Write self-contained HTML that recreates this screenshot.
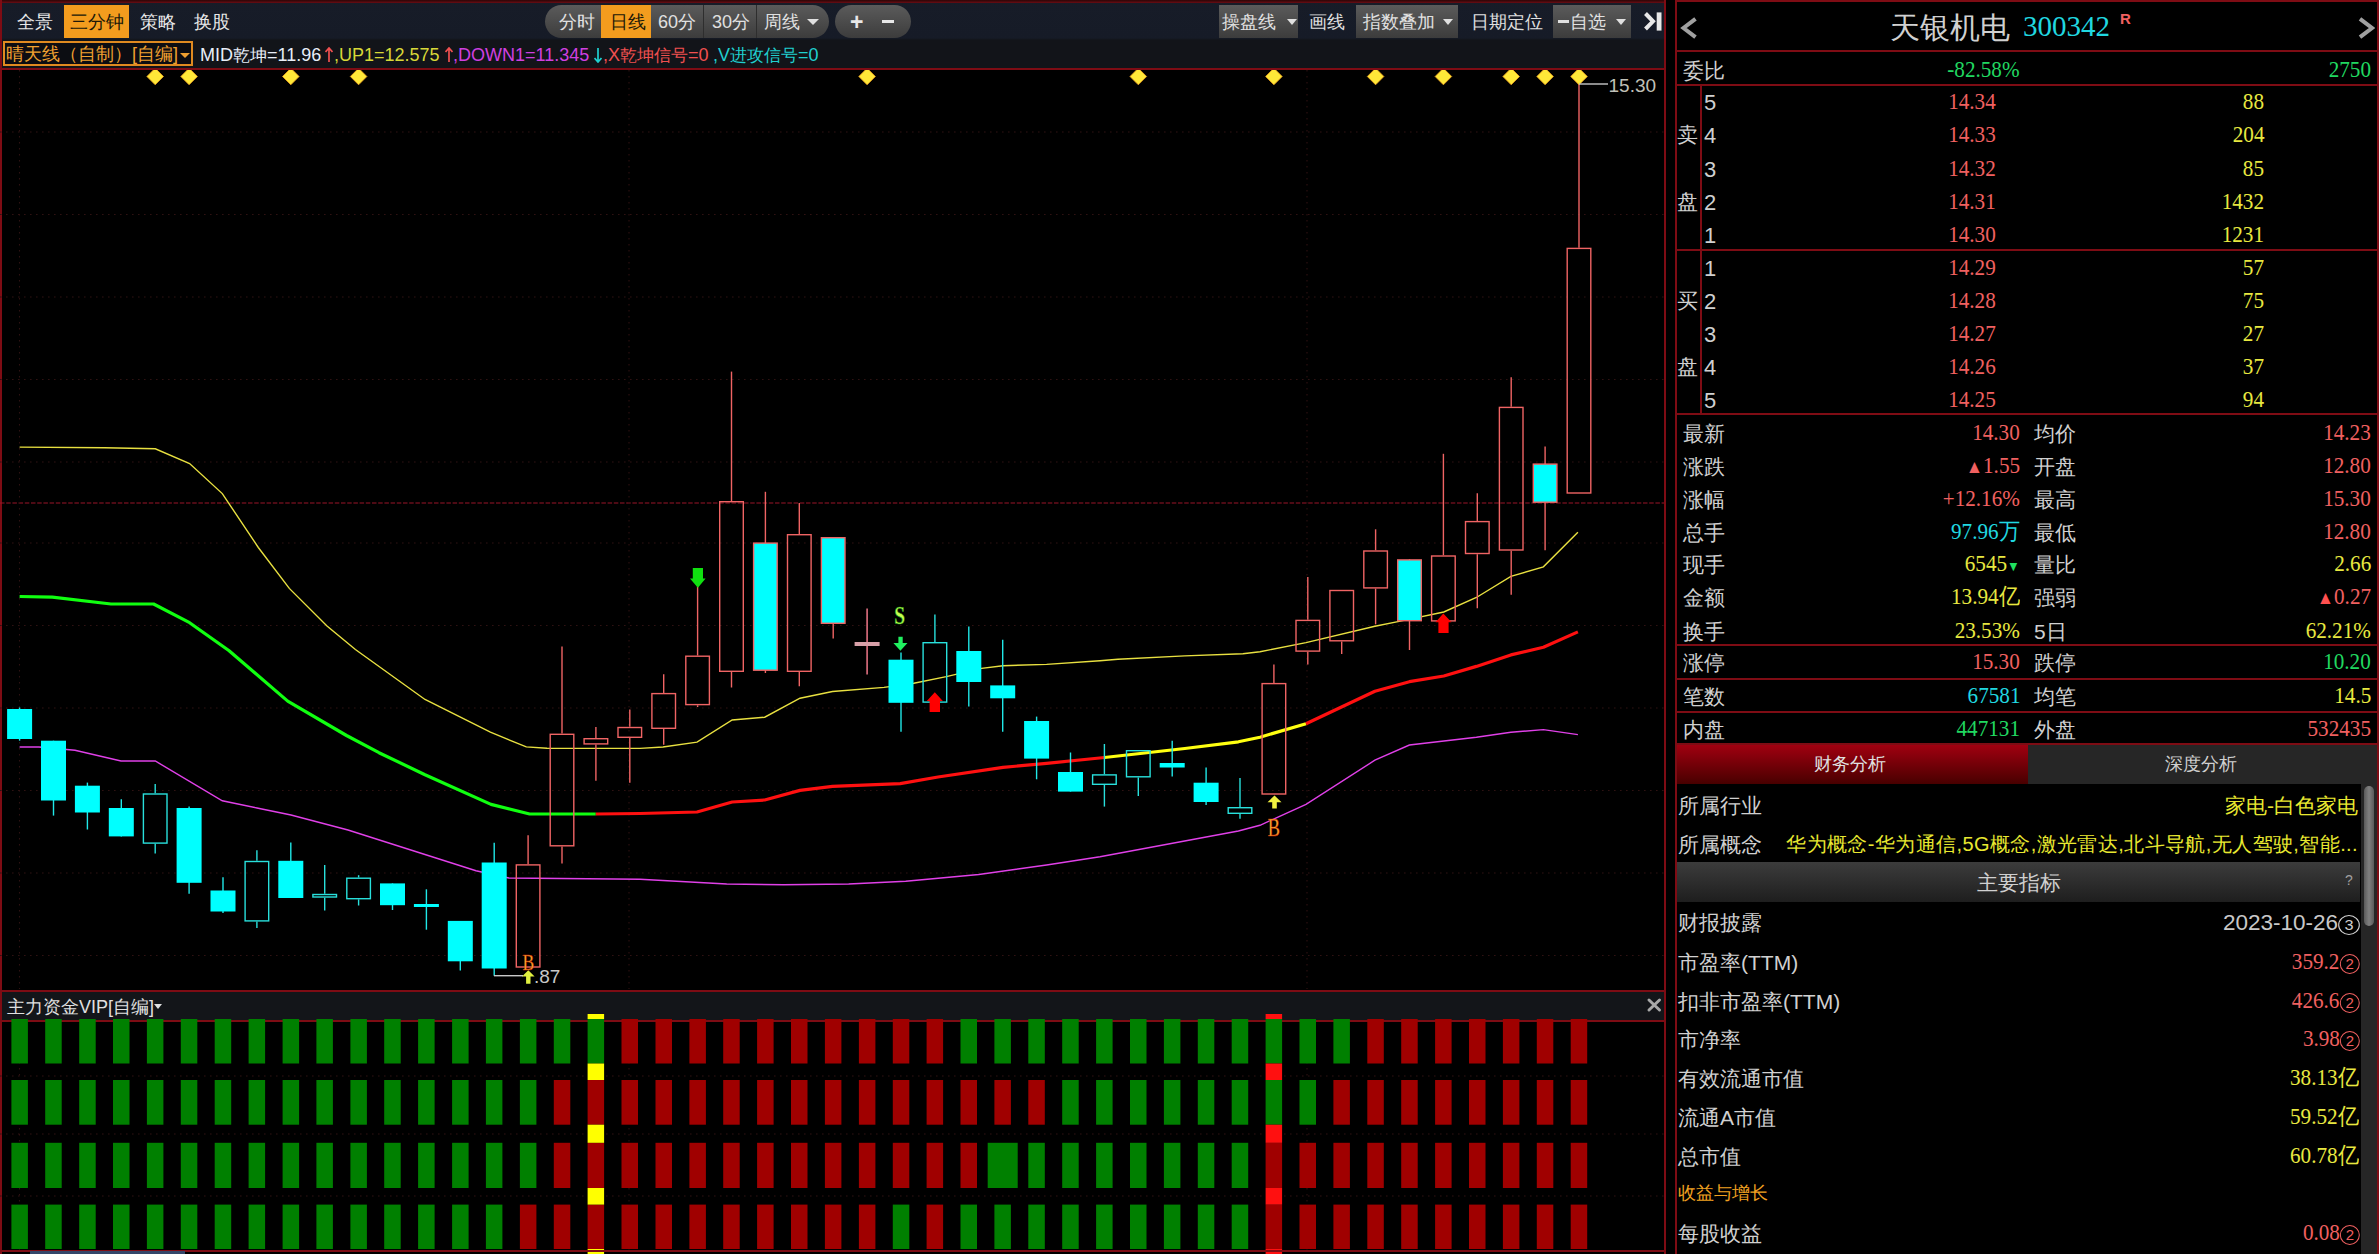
<!DOCTYPE html>
<html><head><meta charset="utf-8">
<style>
*{margin:0;padding:0;box-sizing:border-box}
html,body{width:2379px;height:1254px;overflow:hidden;background:#000;font-family:"Liberation Sans",sans-serif;color:#d8d8d8}
.a{position:absolute}
.rl{position:absolute;background:#7e0c14}
.tb{position:absolute;left:0;top:0;width:1666px;height:69px;background:linear-gradient(#171c28 0,#161b27 38px,#121419 40px,#121419 100%)}
.t{position:absolute;white-space:nowrap;line-height:1}
.btn{position:absolute;background:linear-gradient(#5b5b5b,#3c3c3c)}
.ser{font-family:"Liberation Serif",serif}
.rp .t{font-size:21px}
</style></head><body>
<!-- LEFT PANEL -->
<div class="tb"></div>
<div class="rl" style="left:0;top:0;width:1666px;height:3px;background:linear-gradient(#2a0606,#6a0c14)"></div>
<!-- left buttons -->
<div class="a" style="left:64px;top:5px;width:65px;height:33px;background:#f39c1e"></div>
<div class="t" style="left:17px;top:13px;font-size:18px;color:#e8e8e8">全景</div>
<div class="t" style="left:70px;top:13px;font-size:18px;color:#201808">三分钟</div>
<div class="t" style="left:140px;top:13px;font-size:18px;color:#e8e8e8">策略</div>
<div class="t" style="left:194px;top:13px;font-size:18px;color:#e8e8e8">换股</div>
<!-- pill group -->
<div class="btn" style="left:545px;top:5px;width:284px;height:33px;border-radius:17px;overflow:hidden">
  <div class="a" style="left:56px;top:0;width:50px;height:33px;background:#f39c1e"></div>
  <div class="a" style="left:158px;top:0;width:1px;height:33px;background:#2e2e2e"></div>
  <div class="a" style="left:211px;top:0;width:1px;height:33px;background:#2e2e2e"></div>
</div>
<div class="t" style="left:559px;top:13px;font-size:18px;color:#e0e0e0">分时</div>
<div class="t" style="left:610px;top:13px;font-size:18px;color:#201808">日线</div>
<div class="t" style="left:658px;top:13px;font-size:18px;color:#e0e0e0">60分</div>
<div class="t" style="left:712px;top:13px;font-size:18px;color:#e0e0e0">30分</div>
<div class="t" style="left:764px;top:13px;font-size:18px;color:#e0e0e0">周线</div>
<div class="a" style="left:807px;top:19px;width:0;height:0;border-left:6px solid transparent;border-right:6px solid transparent;border-top:6px solid #e0e0e0"></div>
<div class="btn" style="left:835px;top:5px;width:76px;height:33px;border-radius:17px"></div>
<div class="t" style="left:850px;top:11px;font-size:23px;font-weight:bold;color:#e8e8e8">+</div>
<div class="a" style="left:882px;top:20px;width:12px;height:3px;background:#e8e8e8"></div>
<!-- right buttons -->
<div class="btn" style="left:1219px;top:5px;width:79px;height:33px"></div>
<div class="t" style="left:1222px;top:13px;font-size:18px;color:#e0e0e0">操盘线</div>
<div class="a" style="left:1287px;top:19px;width:0;height:0;border-left:5px solid transparent;border-right:5px solid transparent;border-top:6px solid #e0e0e0"></div>
<div class="t" style="left:1309px;top:13px;font-size:18px;color:#e0e0e0">画线</div>
<div class="btn" style="left:1356px;top:5px;width:102px;height:33px"></div>
<div class="t" style="left:1363px;top:13px;font-size:18px;color:#e0e0e0">指数叠加</div>
<div class="a" style="left:1443px;top:19px;width:0;height:0;border-left:5px solid transparent;border-right:5px solid transparent;border-top:6px solid #e0e0e0"></div>
<div class="t" style="left:1471px;top:13px;font-size:18px;color:#e0e0e0">日期定位</div>
<div class="btn" style="left:1553px;top:5px;width:78px;height:33px"></div>
<div class="a" style="left:1558px;top:20px;width:11px;height:3px;background:#e0e0e0"></div>
<div class="t" style="left:1570px;top:13px;font-size:18px;color:#e0e0e0">自选</div>
<div class="a" style="left:1616px;top:19px;width:0;height:0;border-left:5px solid transparent;border-right:5px solid transparent;border-top:6px solid #e0e0e0"></div>
<svg class="a" style="left:1642px;top:11px" width="24" height="22"><path d="M3.5,2.5 L11,10.3 L3.5,18" fill="none" stroke="#e8e8e8" stroke-width="4"/><rect x="14.7" y="1.4" width="4.8" height="18.2" fill="#e8e8e8"/></svg>
<!-- indicator line -->
<div class="a" style="left:3px;top:41px;width:190px;height:25px;border:2px solid #e08a20;background:#0c0d12"></div>
<div class="t" style="left:6px;top:45px;font-size:18px;color:#f0a030">晴天线（自制）[自编]</div>
<div class="a" style="left:180px;top:53px;width:0;height:0;border-left:5px solid transparent;border-right:5px solid transparent;border-top:5px solid #f0a030"></div>
<div class="t" style="left:200px;top:46px;font-size:18px;color:#e8eef8">MID<span style="font-size:17px">乾坤</span>=11.96</div><div class="t" style="left:334px;top:46px;font-size:18px;color:#d8d838">,UP1=12.575</div><div class="t" style="left:453px;top:46px;font-size:18px;color:#d040e0">,DOWN1=11.345</div><div class="t" style="left:603px;top:46px;font-size:18px;color:#f05050">,X<span style="font-size:17px">乾坤信号</span>=0</div><div class="t" style="left:713px;top:46px;font-size:18px;color:#20d0d0">,V<span style="font-size:17px">进攻信号</span>=0</div><svg class="a" style="left:325px;top:47px" width="8" height="16"><path d="M4,1 L4,15 M0.5,5 L4,1 L7.5,5" fill="none" stroke="#f05050" stroke-width="1.7"/></svg><svg class="a" style="left:444.5px;top:47px" width="8" height="16"><path d="M4,1 L4,15 M0.5,5 L4,1 L7.5,5" fill="none" stroke="#f05050" stroke-width="1.7"/></svg><svg class="a" style="left:593.5px;top:47px" width="8" height="16"><path d="M4,1 L4,15 M0.5,11 L4,15 L7.5,11" fill="none" stroke="#20d0d0" stroke-width="1.7"/></svg>
<!-- red lines left panel -->
<div class="rl" style="left:0;top:68px;width:1666px;height:2px"></div>
<div class="rl" style="left:0;top:0;width:2px;height:1254px"></div>
<div class="rl" style="left:1664px;top:0;width:2px;height:1254px"></div>
<svg width="1664" height="919" viewBox="0 70 1664 919" style="position:absolute;left:0;top:70px">
<line x1="0" y1="132" x2="1664" y2="132" stroke="#2e1212" stroke-width="1.1" stroke-dasharray="1.6,4.4"/>
<line x1="0" y1="214.5" x2="1664" y2="214.5" stroke="#2e1212" stroke-width="1.1" stroke-dasharray="1.6,4.4"/>
<line x1="0" y1="297" x2="1664" y2="297" stroke="#2e1212" stroke-width="1.1" stroke-dasharray="1.6,4.4"/>
<line x1="0" y1="379.5" x2="1664" y2="379.5" stroke="#2e1212" stroke-width="1.1" stroke-dasharray="1.6,4.4"/>
<line x1="0" y1="462" x2="1664" y2="462" stroke="#2e1212" stroke-width="1.1" stroke-dasharray="1.6,4.4"/>
<line x1="0" y1="543" x2="1664" y2="543" stroke="#2e1212" stroke-width="1.1" stroke-dasharray="1.6,4.4"/>
<line x1="0" y1="625.5" x2="1664" y2="625.5" stroke="#2e1212" stroke-width="1.1" stroke-dasharray="1.6,4.4"/>
<line x1="0" y1="708" x2="1664" y2="708" stroke="#2e1212" stroke-width="1.1" stroke-dasharray="1.6,4.4"/>
<line x1="0" y1="790.5" x2="1664" y2="790.5" stroke="#2e1212" stroke-width="1.1" stroke-dasharray="1.6,4.4"/>
<line x1="0" y1="873" x2="1664" y2="873" stroke="#2e1212" stroke-width="1.1" stroke-dasharray="1.6,4.4"/>
<line x1="0" y1="955.5" x2="1664" y2="955.5" stroke="#2e1212" stroke-width="1.1" stroke-dasharray="1.6,4.4"/>
<line x1="0" y1="503" x2="1664" y2="503" stroke="#9a1428" stroke-width="1.2" stroke-dasharray="4.5,1.7"/>
<line x1="19.5" y1="70" x2="19.5" y2="989" stroke="#2e1212" stroke-width="1.1" stroke-dasharray="1.6,4.4"/>
<line x1="629" y1="70" x2="629" y2="989" stroke="#2e1212" stroke-width="1.1" stroke-dasharray="1.6,4.4"/>
<line x1="1307" y1="70" x2="1307" y2="989" stroke="#2e1212" stroke-width="1.1" stroke-dasharray="1.6,4.4"/>
<polyline points="19.6,447.1 104.6,447.8 155.3,448.8 189.6,463.5 222.3,493.6 258.3,547.5 289.3,588.4 327.0,626.0 355.4,649.5 425.0,699.5 490.4,732.2 526.3,746.9 547.0,748.3 640.0,748.4 663.0,747.0 697.0,742.2 732.2,720.0 764.7,717.2 800.0,698.2 832.5,691.5 884.0,687.4 913.8,683.3 946.3,676.6 981.5,668.4 1003.0,665.7 1046.6,664.4 1100.0,660.8 1117.9,659.2 1184.8,655.9 1242.9,653.7 1260.0,651.8 1306.0,642.6 1374.9,626.2 1397.9,621.6 1443.8,612.0 1476.4,597.5 1510.9,576.4 1543.4,566.8 1577.9,532.3" fill="none" stroke="#e8e040" stroke-width="1.4"/>
<polyline points="19.6,747.0 39.0,747.0 75.0,750.2 121.0,761.0 155.3,761.0 222.3,800.8 257.0,808.0 291.0,815.0 348.0,830.0 476.0,870.7 508.8,878.0 640.0,879.3 726.7,884.0 783.7,884.8 848.7,884.0 905.7,881.2 978.8,874.5 1046.6,865.0 1100.0,856.8 1238.4,831.0 1260.0,825.3 1306.0,804.3 1374.9,760.2 1409.4,745.0 1476.4,737.2 1510.9,732.3 1543.4,729.6 1577.9,734.6" fill="none" stroke="#e040e8" stroke-width="1.4"/>
<polyline points="19.6,596.5 52.3,597.2 111.0,604.0 153.6,604.0 189.6,622.7 228.8,650.5 287.7,701.1 346.5,735.5 379.0,752.7 425.0,774.7 491.0,804.4 529.6,814.0 595.8,814.0" fill="none" stroke="#10ff10" stroke-width="3.2" stroke-linejoin="round"/>
<polyline points="595.8,814.0 640.0,813.5 697.0,812.0 732.2,802.0 764.7,800.0 800.0,790.4 832.5,786.4 900.2,783.6 938.0,777.0 1003.0,767.4 1046.6,763.3 1104.5,757.5" fill="none" stroke="#ff1010" stroke-width="3.2" stroke-linejoin="round"/>
<polyline points="1104.5,757.5 1184.8,748.5 1238.4,741.8 1260.0,737.2 1306.0,723.8" fill="none" stroke="#ffff10" stroke-width="3.2" stroke-linejoin="round"/>
<polyline points="1306.0,723.8 1374.9,691.3 1409.4,681.7 1443.8,676.0 1476.4,666.4 1510.9,654.9 1543.4,647.2 1577.9,631.9" fill="none" stroke="#ff1010" stroke-width="3.2" stroke-linejoin="round"/>
<line x1="19.6" y1="707.5" x2="19.6" y2="740.7" stroke="#20e8e8" stroke-width="1.4"/>
<rect x="7.1" y="709" width="25" height="30.0" fill="#00ffff"/>
<line x1="53.5" y1="740.7" x2="53.5" y2="815.6" stroke="#20e8e8" stroke-width="1.4"/>
<rect x="41.0" y="740.7" width="25" height="59.8" fill="#00ffff"/>
<line x1="87.4" y1="782.6" x2="87.4" y2="829.5" stroke="#20e8e8" stroke-width="1.4"/>
<rect x="74.9" y="785.7" width="25" height="26.8" fill="#00ffff"/>
<line x1="121.3" y1="799.3" x2="121.3" y2="836.4" stroke="#20e8e8" stroke-width="1.4"/>
<rect x="108.8" y="808" width="25" height="28.4" fill="#00ffff"/>
<line x1="155.2" y1="784" x2="155.2" y2="793.3" stroke="#28e0dc" stroke-width="1.4"/>
<line x1="155.2" y1="843.8" x2="155.2" y2="853.4" stroke="#28e0dc" stroke-width="1.4"/>
<rect x="143.4" y="794.0" width="23.6" height="49.1" fill="none" stroke="#28e0dc" stroke-width="1.4"/>
<line x1="189.1" y1="806.5" x2="189.1" y2="893.8" stroke="#20e8e8" stroke-width="1.4"/>
<rect x="176.6" y="808" width="25" height="74.8" fill="#00ffff"/>
<line x1="223.0" y1="877.3" x2="223.0" y2="913" stroke="#20e8e8" stroke-width="1.4"/>
<rect x="210.5" y="890.5" width="25" height="21.0" fill="#00ffff"/>
<line x1="256.9" y1="850.3" x2="256.9" y2="860.8" stroke="#28e0dc" stroke-width="1.4"/>
<line x1="256.9" y1="921.6" x2="256.9" y2="928" stroke="#28e0dc" stroke-width="1.4"/>
<rect x="245.1" y="861.5" width="23.6" height="59.4" fill="none" stroke="#28e0dc" stroke-width="1.4"/>
<line x1="290.8" y1="842.4" x2="290.8" y2="898" stroke="#20e8e8" stroke-width="1.4"/>
<rect x="278.3" y="860.8" width="25" height="37.2" fill="#00ffff"/>
<line x1="324.7" y1="865" x2="324.7" y2="893.8" stroke="#28e0dc" stroke-width="1.4"/>
<line x1="324.7" y1="897.7" x2="324.7" y2="910.6" stroke="#28e0dc" stroke-width="1.4"/>
<rect x="312.9" y="894.5" width="23.6" height="2.5" fill="none" stroke="#28e0dc" stroke-width="1.4"/>
<line x1="358.6" y1="875.2" x2="358.6" y2="877.5" stroke="#28e0dc" stroke-width="1.4"/>
<line x1="358.6" y1="899.4" x2="358.6" y2="905.5" stroke="#28e0dc" stroke-width="1.4"/>
<rect x="346.8" y="878.2" width="23.6" height="20.5" fill="none" stroke="#28e0dc" stroke-width="1.4"/>
<line x1="392.5" y1="883.4" x2="392.5" y2="910" stroke="#20e8e8" stroke-width="1.4"/>
<rect x="380.0" y="883.4" width="25" height="21.8" fill="#00ffff"/>
<line x1="426.4" y1="889.3" x2="426.4" y2="929.7" stroke="#20e8e8" stroke-width="1.4"/>
<rect x="413.9" y="904" width="25" height="3.0" fill="#00ffff"/>
<line x1="460.3" y1="920.9" x2="460.3" y2="970.4" stroke="#20e8e8" stroke-width="1.4"/>
<rect x="447.8" y="920.9" width="25" height="40.4" fill="#00ffff"/>
<line x1="494.2" y1="842.7" x2="494.2" y2="975.7" stroke="#20e8e8" stroke-width="1.4"/>
<rect x="481.7" y="862.5" width="25" height="106.0" fill="#00ffff"/>
<line x1="528.1" y1="835.3" x2="528.1" y2="864.2" stroke="#f06464" stroke-width="1.4"/>
<rect x="516.3" y="864.9" width="23.6" height="102.1" fill="none" stroke="#f06464" stroke-width="1.4"/>
<line x1="562.0" y1="646.5" x2="562.0" y2="733.6" stroke="#f06464" stroke-width="1.4"/>
<line x1="562.0" y1="846.5" x2="562.0" y2="863.4" stroke="#f06464" stroke-width="1.4"/>
<rect x="550.2" y="734.3" width="23.6" height="111.5" fill="none" stroke="#f06464" stroke-width="1.4"/>
<line x1="595.9" y1="727" x2="595.9" y2="738" stroke="#f06464" stroke-width="1.4"/>
<line x1="595.9" y1="744.6" x2="595.9" y2="780.7" stroke="#f06464" stroke-width="1.4"/>
<rect x="584.1" y="738.7" width="23.6" height="5.2" fill="none" stroke="#f06464" stroke-width="1.4"/>
<line x1="629.8" y1="709.4" x2="629.8" y2="726.8" stroke="#f06464" stroke-width="1.4"/>
<line x1="629.8" y1="738" x2="629.8" y2="782.8" stroke="#f06464" stroke-width="1.4"/>
<rect x="618.0" y="727.5" width="23.6" height="9.8" fill="none" stroke="#f06464" stroke-width="1.4"/>
<line x1="663.7" y1="674.2" x2="663.7" y2="692.9" stroke="#f06464" stroke-width="1.4"/>
<line x1="663.7" y1="729" x2="663.7" y2="744.7" stroke="#f06464" stroke-width="1.4"/>
<rect x="651.9" y="693.6" width="23.6" height="34.7" fill="none" stroke="#f06464" stroke-width="1.4"/>
<line x1="697.6" y1="586" x2="697.6" y2="655.5" stroke="#f06464" stroke-width="1.4"/>
<line x1="697.6" y1="705.3" x2="697.6" y2="707" stroke="#f06464" stroke-width="1.4"/>
<rect x="685.8" y="656.2" width="23.6" height="48.4" fill="none" stroke="#f06464" stroke-width="1.4"/>
<line x1="731.5" y1="371.6" x2="731.5" y2="501" stroke="#f06464" stroke-width="1.4"/>
<line x1="731.5" y1="672" x2="731.5" y2="687.5" stroke="#f06464" stroke-width="1.4"/>
<rect x="719.7" y="501.7" width="23.6" height="169.6" fill="none" stroke="#f06464" stroke-width="1.4"/>
<line x1="765.4" y1="491.8" x2="765.4" y2="673" stroke="#f06464" stroke-width="1.4"/>
<rect x="753.6" y="543.1" width="23.6" height="127.1" fill="#00ffff" stroke="#f06464" stroke-width="1.4"/>
<line x1="799.3" y1="503" x2="799.3" y2="534" stroke="#f06464" stroke-width="1.4"/>
<line x1="799.3" y1="672" x2="799.3" y2="686.2" stroke="#f06464" stroke-width="1.4"/>
<rect x="787.5" y="534.7" width="23.6" height="136.6" fill="none" stroke="#f06464" stroke-width="1.4"/>
<line x1="833.2" y1="537" x2="833.2" y2="638.5" stroke="#f06464" stroke-width="1.4"/>
<rect x="821.4" y="537.7" width="23.6" height="85.6" fill="#00ffff" stroke="#f06464" stroke-width="1.4"/>
<line x1="867.1" y1="608.4" x2="867.1" y2="674.5" stroke="#e07080" stroke-width="1.6"/>
<rect x="854.6" y="642" width="25" height="4" fill="#d8a0a8"/>
<line x1="901.0" y1="652.5" x2="901.0" y2="731.8" stroke="#20e8e8" stroke-width="1.4"/>
<rect x="888.5" y="659.7" width="25" height="43.1" fill="#00ffff"/>
<line x1="934.9" y1="614.6" x2="934.9" y2="642" stroke="#28e0dc" stroke-width="1.4"/>
<rect x="923.1" y="642.7" width="23.6" height="59.4" fill="none" stroke="#28e0dc" stroke-width="1.4"/>
<line x1="968.8" y1="626.4" x2="968.8" y2="706.6" stroke="#20e8e8" stroke-width="1.4"/>
<rect x="956.3" y="651" width="25" height="31.0" fill="#00ffff"/>
<line x1="1002.7" y1="639.8" x2="1002.7" y2="731.8" stroke="#20e8e8" stroke-width="1.4"/>
<rect x="990.2" y="685.4" width="25" height="12.9" fill="#00ffff"/>
<line x1="1036.6" y1="716.6" x2="1036.6" y2="779.3" stroke="#20e8e8" stroke-width="1.4"/>
<rect x="1024.1" y="721" width="25" height="37.6" fill="#00ffff"/>
<line x1="1070.5" y1="752.5" x2="1070.5" y2="791.6" stroke="#20e8e8" stroke-width="1.4"/>
<rect x="1058.0" y="772" width="25" height="19.6" fill="#00ffff"/>
<line x1="1104.4" y1="744" x2="1104.4" y2="774.2" stroke="#28e0dc" stroke-width="1.4"/>
<line x1="1104.4" y1="785" x2="1104.4" y2="806.6" stroke="#28e0dc" stroke-width="1.4"/>
<rect x="1092.6" y="774.9" width="23.6" height="9.4" fill="none" stroke="#28e0dc" stroke-width="1.4"/>
<line x1="1138.3" y1="777.5" x2="1138.3" y2="796" stroke="#28e0dc" stroke-width="1.4"/>
<rect x="1126.5" y="750.7" width="23.6" height="26.1" fill="none" stroke="#28e0dc" stroke-width="1.4"/>
<line x1="1172.2" y1="740.7" x2="1172.2" y2="776.4" stroke="#20e8e8" stroke-width="1.4"/>
<rect x="1159.7" y="763" width="25" height="4.5" fill="#00ffff"/>
<line x1="1206.1" y1="767.5" x2="1206.1" y2="805" stroke="#20e8e8" stroke-width="1.4"/>
<rect x="1193.6" y="782.7" width="25" height="19.3" fill="#00ffff"/>
<line x1="1240.0" y1="778" x2="1240.0" y2="807" stroke="#28e0dc" stroke-width="1.4"/>
<line x1="1240.0" y1="814" x2="1240.0" y2="818.8" stroke="#28e0dc" stroke-width="1.4"/>
<rect x="1228.2" y="807.7" width="23.6" height="5.6" fill="none" stroke="#28e0dc" stroke-width="1.4"/>
<line x1="1273.9" y1="664.5" x2="1273.9" y2="682.9" stroke="#f06464" stroke-width="1.4"/>
<rect x="1262.1" y="683.6" width="23.6" height="110.4" fill="none" stroke="#f06464" stroke-width="1.4"/>
<line x1="1307.8" y1="577" x2="1307.8" y2="619.7" stroke="#f06464" stroke-width="1.4"/>
<line x1="1307.8" y1="651.8" x2="1307.8" y2="664.5" stroke="#f06464" stroke-width="1.4"/>
<rect x="1296.0" y="620.4" width="23.6" height="30.7" fill="none" stroke="#f06464" stroke-width="1.4"/>
<line x1="1341.7" y1="641.5" x2="1341.7" y2="654" stroke="#f06464" stroke-width="1.4"/>
<rect x="1329.9" y="590.5" width="23.6" height="50.3" fill="none" stroke="#f06464" stroke-width="1.4"/>
<line x1="1375.6" y1="529.3" x2="1375.6" y2="550.3" stroke="#f06464" stroke-width="1.4"/>
<line x1="1375.6" y1="588.6" x2="1375.6" y2="624.3" stroke="#f06464" stroke-width="1.4"/>
<rect x="1363.8" y="551.0" width="23.6" height="36.9" fill="none" stroke="#f06464" stroke-width="1.4"/>
<line x1="1409.5" y1="559.2" x2="1409.5" y2="650" stroke="#f06464" stroke-width="1.4"/>
<rect x="1397.7" y="559.9" width="23.6" height="60.8" fill="#00ffff" stroke="#f06464" stroke-width="1.4"/>
<line x1="1443.4" y1="453.8" x2="1443.4" y2="555.3" stroke="#f06464" stroke-width="1.4"/>
<rect x="1431.6" y="556.0" width="23.6" height="64.9" fill="none" stroke="#f06464" stroke-width="1.4"/>
<line x1="1477.3" y1="493.3" x2="1477.3" y2="520.9" stroke="#f06464" stroke-width="1.4"/>
<line x1="1477.3" y1="554.2" x2="1477.3" y2="608.2" stroke="#f06464" stroke-width="1.4"/>
<rect x="1465.5" y="521.6" width="23.6" height="31.9" fill="none" stroke="#f06464" stroke-width="1.4"/>
<line x1="1511.2" y1="377.2" x2="1511.2" y2="406.7" stroke="#f06464" stroke-width="1.4"/>
<line x1="1511.2" y1="550.7" x2="1511.2" y2="594.8" stroke="#f06464" stroke-width="1.4"/>
<rect x="1499.4" y="407.4" width="23.6" height="142.6" fill="none" stroke="#f06464" stroke-width="1.4"/>
<line x1="1545.1" y1="446.5" x2="1545.1" y2="550.3" stroke="#f06464" stroke-width="1.4"/>
<rect x="1533.3" y="464.1" width="23.6" height="38.1" fill="#00ffff" stroke="#f06464" stroke-width="1.4"/>
<line x1="1579.0" y1="83.8" x2="1579.0" y2="247.7" stroke="#f06464" stroke-width="1.4"/>
<rect x="1567.2" y="248.4" width="23.6" height="244.6" fill="none" stroke="#f06464" stroke-width="1.4"/>
<path d="M155.2,68.2 L163.5,76.5 L155.2,84.8 L146.9,76.5Z" fill="#ffe838" stroke="#f0a020" stroke-width="0.8"/>
<path d="M189.1,68.2 L197.4,76.5 L189.1,84.8 L180.8,76.5Z" fill="#ffe838" stroke="#f0a020" stroke-width="0.8"/>
<path d="M290.8,68.2 L299.1,76.5 L290.8,84.8 L282.5,76.5Z" fill="#ffe838" stroke="#f0a020" stroke-width="0.8"/>
<path d="M358.6,68.2 L366.9,76.5 L358.6,84.8 L350.3,76.5Z" fill="#ffe838" stroke="#f0a020" stroke-width="0.8"/>
<path d="M867.1,68.2 L875.4,76.5 L867.1,84.8 L858.8,76.5Z" fill="#ffe838" stroke="#f0a020" stroke-width="0.8"/>
<path d="M1138.3,68.2 L1146.6,76.5 L1138.3,84.8 L1130.0,76.5Z" fill="#ffe838" stroke="#f0a020" stroke-width="0.8"/>
<path d="M1273.9,68.2 L1282.2,76.5 L1273.9,84.8 L1265.6,76.5Z" fill="#ffe838" stroke="#f0a020" stroke-width="0.8"/>
<path d="M1375.6,68.2 L1383.9,76.5 L1375.6,84.8 L1367.3,76.5Z" fill="#ffe838" stroke="#f0a020" stroke-width="0.8"/>
<path d="M1443.4,68.2 L1451.7,76.5 L1443.4,84.8 L1435.1,76.5Z" fill="#ffe838" stroke="#f0a020" stroke-width="0.8"/>
<path d="M1511.2,68.2 L1519.5,76.5 L1511.2,84.8 L1502.9,76.5Z" fill="#ffe838" stroke="#f0a020" stroke-width="0.8"/>
<path d="M1545.1,68.2 L1553.4,76.5 L1545.1,84.8 L1536.8,76.5Z" fill="#ffe838" stroke="#f0a020" stroke-width="0.8"/>
<path d="M1579.0,68.2 L1587.3,76.5 L1579.0,84.8 L1570.7,76.5Z" fill="#ffe838" stroke="#f0a020" stroke-width="0.8"/>
<line x1="1579" y1="84" x2="1608" y2="84" stroke="#c8c8c8" stroke-width="1.4"/>
<text x="1608.5" y="91.5" font-family="Liberation Sans" font-size="19" fill="#c0c0b8">15.30</text>
<line x1="494" y1="975.7" x2="523" y2="975.7" stroke="#c8c8c8" stroke-width="1.4"/>
<text x="534" y="982.5" font-family="Liberation Sans" font-size="19" fill="#c8c8c8">.87</text>
<path d="M692.8,568 H703 V578.5 H705.6 L697.9,587.7 L690,578.5 H692.8Z" fill="#10e010"/>
<path d="M898.4,636.8 H902.7 V643 H907.5 L900.4,650.7 L893.4,643 H898.4Z" fill="#20f060"/>
<path d="M934.8,692.3 L942.8,701 H940 V712 H929.6 V701 H926.8Z" fill="#ff0000"/>
<path d="M1443.3,613.4 L1451.5,622.3 H1448.6 V632.9 H1438.4 V622.3 H1435.5Z" fill="#ff0000"/>
<path d="M1274.5,795.5 L1281.5,802.2 H1276.8 V808.4 H1272.2 V802.2 H1267.5Z" fill="#f0f040"/>
<path d="M528.3,970.3 L534.6,976.5 H530.5 V983.7 H526.1 V976.5 H522Z" fill="#e0f040"/>
<text x="894.3" y="624.4" textLength="10.8" lengthAdjust="spacingAndGlyphs" font-family="Liberation Serif" font-weight="bold" font-size="25" fill="#c8ff50" stroke="#109010" stroke-width="0.6">S</text>
<text x="1267.7" y="836.2" textLength="12.2" lengthAdjust="spacingAndGlyphs" font-family="Liberation Serif" font-size="25" fill="#ffb030" stroke="#c02000" stroke-width="0.5">B</text>
<text x="522.5" y="970.3" textLength="11.7" lengthAdjust="spacingAndGlyphs" font-family="Liberation Serif" font-size="23" fill="#ffb030" stroke="#c02000" stroke-width="0.5">B</text>
</svg>
<div class="rl" style="left:0;top:990px;width:1666px;height:2px"></div>
<div class="a" style="left:2px;top:992px;width:1662px;height:28px;background:#131519"></div>
<div class="t" style="left:7px;top:998px;font-size:18px;color:#e0e0e0">主力资金VIP[自编]</div>
<div class="a" style="left:154px;top:1004px;width:0;height:0;border-left:4.5px solid transparent;border-right:4.5px solid transparent;border-top:5px solid #e0e0e0"></div>
<svg class="a" style="left:1646px;top:997px" width="17" height="16"><path d="M3,3 L13.5,13 M13.5,3 L3,13" stroke="#a8a8a8" stroke-width="3" stroke-linecap="round"/></svg>
<div class="rl" style="left:0;top:1020px;width:1666px;height:2px"></div>
<svg width="1664" height="240" viewBox="0 1014 1664 240" style="position:absolute;left:0;top:1014px">
<line x1="19.5" y1="1020" x2="19.5" y2="1254" stroke="#2e1212" stroke-width="1.1" stroke-dasharray="1.6,4.4"/>
<line x1="629" y1="1020" x2="629" y2="1254" stroke="#2e1212" stroke-width="1.1" stroke-dasharray="1.6,4.4"/>
<line x1="1307" y1="1020" x2="1307" y2="1254" stroke="#2e1212" stroke-width="1.1" stroke-dasharray="1.6,4.4"/>
<line x1="0" y1="1076" x2="1664" y2="1076" stroke="#2e1212" stroke-width="1.1" stroke-dasharray="1.6,4.4"/>
<line x1="0" y1="1134" x2="1664" y2="1134" stroke="#2e1212" stroke-width="1.1" stroke-dasharray="1.6,4.4"/>
<line x1="0" y1="1196" x2="1664" y2="1196" stroke="#2e1212" stroke-width="1.1" stroke-dasharray="1.6,4.4"/>
<rect x="11.4" y="1019" width="16.5" height="44.5" fill="#008000"/>
<rect x="45.2" y="1019" width="16.5" height="44.5" fill="#008000"/>
<rect x="79.2" y="1019" width="16.5" height="44.5" fill="#008000"/>
<rect x="113.0" y="1019" width="16.5" height="44.5" fill="#008000"/>
<rect x="146.9" y="1019" width="16.5" height="44.5" fill="#008000"/>
<rect x="180.8" y="1019" width="16.5" height="44.5" fill="#008000"/>
<rect x="214.7" y="1019" width="16.5" height="44.5" fill="#008000"/>
<rect x="248.6" y="1019" width="16.5" height="44.5" fill="#008000"/>
<rect x="282.6" y="1019" width="16.5" height="44.5" fill="#008000"/>
<rect x="316.4" y="1019" width="16.5" height="44.5" fill="#008000"/>
<rect x="350.4" y="1019" width="16.5" height="44.5" fill="#008000"/>
<rect x="384.2" y="1019" width="16.5" height="44.5" fill="#008000"/>
<rect x="418.1" y="1019" width="16.5" height="44.5" fill="#008000"/>
<rect x="452.1" y="1019" width="16.5" height="44.5" fill="#008000"/>
<rect x="485.9" y="1019" width="16.5" height="44.5" fill="#008000"/>
<rect x="519.9" y="1019" width="16.5" height="44.5" fill="#008000"/>
<rect x="553.8" y="1019" width="16.5" height="44.5" fill="#008000"/>
<rect x="587.6" y="1019" width="16.5" height="44.5" fill="#008000"/>
<rect x="621.5" y="1019" width="16.5" height="44.5" fill="#a00000"/>
<rect x="655.5" y="1019" width="16.5" height="44.5" fill="#a00000"/>
<rect x="689.4" y="1019" width="16.5" height="44.5" fill="#a00000"/>
<rect x="723.2" y="1019" width="16.5" height="44.5" fill="#a00000"/>
<rect x="757.1" y="1019" width="16.5" height="44.5" fill="#a00000"/>
<rect x="791.0" y="1019" width="16.5" height="44.5" fill="#a00000"/>
<rect x="824.9" y="1019" width="16.5" height="44.5" fill="#a00000"/>
<rect x="858.9" y="1019" width="16.5" height="44.5" fill="#a00000"/>
<rect x="892.8" y="1019" width="16.5" height="44.5" fill="#a00000"/>
<rect x="926.6" y="1019" width="16.5" height="44.5" fill="#a00000"/>
<rect x="960.5" y="1019" width="16.5" height="44.5" fill="#008000"/>
<rect x="994.4" y="1019" width="16.5" height="44.5" fill="#008000"/>
<rect x="1028.3" y="1019" width="16.5" height="44.5" fill="#008000"/>
<rect x="1062.2" y="1019" width="16.5" height="44.5" fill="#008000"/>
<rect x="1096.1" y="1019" width="16.5" height="44.5" fill="#008000"/>
<rect x="1130.0" y="1019" width="16.5" height="44.5" fill="#008000"/>
<rect x="1163.9" y="1019" width="16.5" height="44.5" fill="#008000"/>
<rect x="1197.8" y="1019" width="16.5" height="44.5" fill="#008000"/>
<rect x="1231.7" y="1019" width="16.5" height="44.5" fill="#008000"/>
<rect x="1265.6" y="1019" width="16.5" height="44.5" fill="#008000"/>
<rect x="1299.5" y="1019" width="16.5" height="44.5" fill="#008000"/>
<rect x="1333.4" y="1019" width="16.5" height="44.5" fill="#008000"/>
<rect x="1367.3" y="1019" width="16.5" height="44.5" fill="#a00000"/>
<rect x="1401.2" y="1019" width="16.5" height="44.5" fill="#a00000"/>
<rect x="1435.1" y="1019" width="16.5" height="44.5" fill="#a00000"/>
<rect x="1469.0" y="1019" width="16.5" height="44.5" fill="#a00000"/>
<rect x="1502.9" y="1019" width="16.5" height="44.5" fill="#a00000"/>
<rect x="1536.8" y="1019" width="16.5" height="44.5" fill="#a00000"/>
<rect x="1570.7" y="1019" width="16.5" height="44.5" fill="#a00000"/>
<rect x="11.4" y="1080" width="16.5" height="44.7" fill="#008000"/>
<rect x="45.2" y="1080" width="16.5" height="44.7" fill="#008000"/>
<rect x="79.2" y="1080" width="16.5" height="44.7" fill="#008000"/>
<rect x="113.0" y="1080" width="16.5" height="44.7" fill="#008000"/>
<rect x="146.9" y="1080" width="16.5" height="44.7" fill="#008000"/>
<rect x="180.8" y="1080" width="16.5" height="44.7" fill="#008000"/>
<rect x="214.7" y="1080" width="16.5" height="44.7" fill="#008000"/>
<rect x="248.6" y="1080" width="16.5" height="44.7" fill="#008000"/>
<rect x="282.6" y="1080" width="16.5" height="44.7" fill="#008000"/>
<rect x="316.4" y="1080" width="16.5" height="44.7" fill="#008000"/>
<rect x="350.4" y="1080" width="16.5" height="44.7" fill="#008000"/>
<rect x="384.2" y="1080" width="16.5" height="44.7" fill="#008000"/>
<rect x="418.1" y="1080" width="16.5" height="44.7" fill="#008000"/>
<rect x="452.1" y="1080" width="16.5" height="44.7" fill="#008000"/>
<rect x="485.9" y="1080" width="16.5" height="44.7" fill="#008000"/>
<rect x="519.9" y="1080" width="16.5" height="44.7" fill="#008000"/>
<rect x="553.8" y="1080" width="16.5" height="44.7" fill="#a00000"/>
<rect x="587.6" y="1080" width="16.5" height="44.7" fill="#a00000"/>
<rect x="621.5" y="1080" width="16.5" height="44.7" fill="#a00000"/>
<rect x="655.5" y="1080" width="16.5" height="44.7" fill="#a00000"/>
<rect x="689.4" y="1080" width="16.5" height="44.7" fill="#a00000"/>
<rect x="723.2" y="1080" width="16.5" height="44.7" fill="#a00000"/>
<rect x="757.1" y="1080" width="16.5" height="44.7" fill="#a00000"/>
<rect x="791.0" y="1080" width="16.5" height="44.7" fill="#a00000"/>
<rect x="824.9" y="1080" width="16.5" height="44.7" fill="#a00000"/>
<rect x="858.9" y="1080" width="16.5" height="44.7" fill="#a00000"/>
<rect x="892.8" y="1080" width="16.5" height="44.7" fill="#a00000"/>
<rect x="926.6" y="1080" width="16.5" height="44.7" fill="#a00000"/>
<rect x="960.5" y="1080" width="16.5" height="44.7" fill="#a00000"/>
<rect x="994.4" y="1080" width="16.5" height="44.7" fill="#a00000"/>
<rect x="1028.3" y="1080" width="16.5" height="44.7" fill="#a00000"/>
<rect x="1062.2" y="1080" width="16.5" height="44.7" fill="#008000"/>
<rect x="1096.1" y="1080" width="16.5" height="44.7" fill="#008000"/>
<rect x="1130.0" y="1080" width="16.5" height="44.7" fill="#008000"/>
<rect x="1163.9" y="1080" width="16.5" height="44.7" fill="#008000"/>
<rect x="1197.8" y="1080" width="16.5" height="44.7" fill="#008000"/>
<rect x="1231.7" y="1080" width="16.5" height="44.7" fill="#008000"/>
<rect x="1265.6" y="1080" width="16.5" height="44.7" fill="#008000"/>
<rect x="1299.5" y="1080" width="16.5" height="44.7" fill="#008000"/>
<rect x="1333.4" y="1080" width="16.5" height="44.7" fill="#a00000"/>
<rect x="1367.3" y="1080" width="16.5" height="44.7" fill="#a00000"/>
<rect x="1401.2" y="1080" width="16.5" height="44.7" fill="#a00000"/>
<rect x="1435.1" y="1080" width="16.5" height="44.7" fill="#a00000"/>
<rect x="1469.0" y="1080" width="16.5" height="44.7" fill="#a00000"/>
<rect x="1502.9" y="1080" width="16.5" height="44.7" fill="#a00000"/>
<rect x="1536.8" y="1080" width="16.5" height="44.7" fill="#a00000"/>
<rect x="1570.7" y="1080" width="16.5" height="44.7" fill="#a00000"/>
<rect x="11.4" y="1142.8" width="16.5" height="45.2" fill="#008000"/>
<rect x="45.2" y="1142.8" width="16.5" height="45.2" fill="#008000"/>
<rect x="79.2" y="1142.8" width="16.5" height="45.2" fill="#008000"/>
<rect x="113.0" y="1142.8" width="16.5" height="45.2" fill="#008000"/>
<rect x="146.9" y="1142.8" width="16.5" height="45.2" fill="#008000"/>
<rect x="180.8" y="1142.8" width="16.5" height="45.2" fill="#008000"/>
<rect x="214.7" y="1142.8" width="16.5" height="45.2" fill="#008000"/>
<rect x="248.6" y="1142.8" width="16.5" height="45.2" fill="#008000"/>
<rect x="282.6" y="1142.8" width="16.5" height="45.2" fill="#008000"/>
<rect x="316.4" y="1142.8" width="16.5" height="45.2" fill="#008000"/>
<rect x="350.4" y="1142.8" width="16.5" height="45.2" fill="#008000"/>
<rect x="384.2" y="1142.8" width="16.5" height="45.2" fill="#008000"/>
<rect x="418.1" y="1142.8" width="16.5" height="45.2" fill="#008000"/>
<rect x="452.1" y="1142.8" width="16.5" height="45.2" fill="#008000"/>
<rect x="485.9" y="1142.8" width="16.5" height="45.2" fill="#008000"/>
<rect x="519.9" y="1142.8" width="16.5" height="45.2" fill="#008000"/>
<rect x="553.8" y="1142.8" width="16.5" height="45.2" fill="#a00000"/>
<rect x="587.6" y="1142.8" width="16.5" height="45.2" fill="#a00000"/>
<rect x="621.5" y="1142.8" width="16.5" height="45.2" fill="#a00000"/>
<rect x="655.5" y="1142.8" width="16.5" height="45.2" fill="#a00000"/>
<rect x="689.4" y="1142.8" width="16.5" height="45.2" fill="#a00000"/>
<rect x="723.2" y="1142.8" width="16.5" height="45.2" fill="#a00000"/>
<rect x="757.1" y="1142.8" width="16.5" height="45.2" fill="#a00000"/>
<rect x="791.0" y="1142.8" width="16.5" height="45.2" fill="#a00000"/>
<rect x="824.9" y="1142.8" width="16.5" height="45.2" fill="#a00000"/>
<rect x="858.9" y="1142.8" width="16.5" height="45.2" fill="#a00000"/>
<rect x="892.8" y="1142.8" width="16.5" height="45.2" fill="#a00000"/>
<rect x="926.6" y="1142.8" width="16.5" height="45.2" fill="#a00000"/>
<rect x="960.5" y="1142.8" width="16.5" height="45.2" fill="#a00000"/>
<rect x="987.7" y="1142.8" width="30" height="45.2" fill="#008000"/>
<rect x="1028.3" y="1142.8" width="16.5" height="45.2" fill="#008000"/>
<rect x="1062.2" y="1142.8" width="16.5" height="45.2" fill="#008000"/>
<rect x="1096.1" y="1142.8" width="16.5" height="45.2" fill="#008000"/>
<rect x="1130.0" y="1142.8" width="16.5" height="45.2" fill="#008000"/>
<rect x="1163.9" y="1142.8" width="16.5" height="45.2" fill="#008000"/>
<rect x="1197.8" y="1142.8" width="16.5" height="45.2" fill="#008000"/>
<rect x="1231.7" y="1142.8" width="16.5" height="45.2" fill="#008000"/>
<rect x="1265.6" y="1142.8" width="16.5" height="45.2" fill="#a00000"/>
<rect x="1299.5" y="1142.8" width="16.5" height="45.2" fill="#a00000"/>
<rect x="1333.4" y="1142.8" width="16.5" height="45.2" fill="#a00000"/>
<rect x="1367.3" y="1142.8" width="16.5" height="45.2" fill="#a00000"/>
<rect x="1401.2" y="1142.8" width="16.5" height="45.2" fill="#a00000"/>
<rect x="1435.1" y="1142.8" width="16.5" height="45.2" fill="#a00000"/>
<rect x="1469.0" y="1142.8" width="16.5" height="45.2" fill="#a00000"/>
<rect x="1502.9" y="1142.8" width="16.5" height="45.2" fill="#a00000"/>
<rect x="1536.8" y="1142.8" width="16.5" height="45.2" fill="#a00000"/>
<rect x="1570.7" y="1142.8" width="16.5" height="45.2" fill="#a00000"/>
<rect x="11.4" y="1204.6" width="16.5" height="44.4" fill="#008000"/>
<rect x="45.2" y="1204.6" width="16.5" height="44.4" fill="#008000"/>
<rect x="79.2" y="1204.6" width="16.5" height="44.4" fill="#008000"/>
<rect x="113.0" y="1204.6" width="16.5" height="44.4" fill="#008000"/>
<rect x="146.9" y="1204.6" width="16.5" height="44.4" fill="#008000"/>
<rect x="180.8" y="1204.6" width="16.5" height="44.4" fill="#008000"/>
<rect x="214.7" y="1204.6" width="16.5" height="44.4" fill="#008000"/>
<rect x="248.6" y="1204.6" width="16.5" height="44.4" fill="#008000"/>
<rect x="282.6" y="1204.6" width="16.5" height="44.4" fill="#008000"/>
<rect x="316.4" y="1204.6" width="16.5" height="44.4" fill="#008000"/>
<rect x="350.4" y="1204.6" width="16.5" height="44.4" fill="#008000"/>
<rect x="384.2" y="1204.6" width="16.5" height="44.4" fill="#008000"/>
<rect x="418.1" y="1204.6" width="16.5" height="44.4" fill="#008000"/>
<rect x="452.1" y="1204.6" width="16.5" height="44.4" fill="#008000"/>
<rect x="485.9" y="1204.6" width="16.5" height="44.4" fill="#008000"/>
<rect x="519.9" y="1204.6" width="16.5" height="44.4" fill="#a00000"/>
<rect x="553.8" y="1204.6" width="16.5" height="44.4" fill="#a00000"/>
<rect x="587.6" y="1204.6" width="16.5" height="44.4" fill="#a00000"/>
<rect x="621.5" y="1204.6" width="16.5" height="44.4" fill="#a00000"/>
<rect x="655.5" y="1204.6" width="16.5" height="44.4" fill="#a00000"/>
<rect x="689.4" y="1204.6" width="16.5" height="44.4" fill="#a00000"/>
<rect x="723.2" y="1204.6" width="16.5" height="44.4" fill="#a00000"/>
<rect x="757.1" y="1204.6" width="16.5" height="44.4" fill="#a00000"/>
<rect x="791.0" y="1204.6" width="16.5" height="44.4" fill="#a00000"/>
<rect x="824.9" y="1204.6" width="16.5" height="44.4" fill="#a00000"/>
<rect x="858.9" y="1204.6" width="16.5" height="44.4" fill="#a00000"/>
<rect x="892.8" y="1204.6" width="16.5" height="44.4" fill="#008000"/>
<rect x="926.6" y="1204.6" width="16.5" height="44.4" fill="#a00000"/>
<rect x="960.5" y="1204.6" width="16.5" height="44.4" fill="#008000"/>
<rect x="994.4" y="1204.6" width="16.5" height="44.4" fill="#008000"/>
<rect x="1028.3" y="1204.6" width="16.5" height="44.4" fill="#008000"/>
<rect x="1062.2" y="1204.6" width="16.5" height="44.4" fill="#008000"/>
<rect x="1096.1" y="1204.6" width="16.5" height="44.4" fill="#008000"/>
<rect x="1130.0" y="1204.6" width="16.5" height="44.4" fill="#008000"/>
<rect x="1163.9" y="1204.6" width="16.5" height="44.4" fill="#008000"/>
<rect x="1197.8" y="1204.6" width="16.5" height="44.4" fill="#008000"/>
<rect x="1231.7" y="1204.6" width="16.5" height="44.4" fill="#008000"/>
<rect x="1265.6" y="1204.6" width="16.5" height="44.4" fill="#a00000"/>
<rect x="1299.5" y="1204.6" width="16.5" height="44.4" fill="#a00000"/>
<rect x="1333.4" y="1204.6" width="16.5" height="44.4" fill="#a00000"/>
<rect x="1367.3" y="1204.6" width="16.5" height="44.4" fill="#a00000"/>
<rect x="1401.2" y="1204.6" width="16.5" height="44.4" fill="#a00000"/>
<rect x="1435.1" y="1204.6" width="16.5" height="44.4" fill="#a00000"/>
<rect x="1469.0" y="1204.6" width="16.5" height="44.4" fill="#a00000"/>
<rect x="1502.9" y="1204.6" width="16.5" height="44.4" fill="#a00000"/>
<rect x="1536.8" y="1204.6" width="16.5" height="44.4" fill="#a00000"/>
<rect x="1570.7" y="1204.6" width="16.5" height="44.4" fill="#a00000"/>
<rect x="587.6" y="1013.6" width="16.5" height="5.4" fill="#ffff00"/>
<rect x="587.6" y="1063.5" width="16.5" height="16.5" fill="#ffff00"/>
<rect x="587.6" y="1124.7" width="16.5" height="18.1" fill="#ffff00"/>
<rect x="587.6" y="1188" width="16.5" height="16.6" fill="#ffff00"/>
<rect x="587.6" y="1249" width="16.5" height="5.0" fill="#ffff00"/>
<rect x="1265.6" y="1013.6" width="16.5" height="5.4" fill="#ff1010"/>
<rect x="1265.6" y="1063.5" width="16.5" height="16.5" fill="#ff1010"/>
<rect x="1265.6" y="1124.7" width="16.5" height="18.1" fill="#ff1010"/>
<rect x="1265.6" y="1188" width="16.5" height="16.6" fill="#ff1010"/>
<rect x="1265.6" y="1249" width="16.5" height="5.0" fill="#ff1010"/>
</svg>
<div class="rl" style="left:0;top:1250px;width:1666px;height:2px"></div>
<div class="a" style="left:30px;top:1251px;width:155px;height:3px;background:#34466a"></div>
<!-- RIGHT PANEL -->
<div class="rp">
<div class="a" style="left:1675px;top:0px;width:704px;height:2px;background:#7e0c14"></div>
<div class="a" style="left:1675px;top:50px;width:704px;height:2px;background:#7e0c14"></div>
<div class="a" style="left:1675px;top:84px;width:704px;height:2px;background:#7e0c14"></div>
<div class="a" style="left:1675px;top:249px;width:704px;height:2px;background:#7e0c14"></div>
<div class="a" style="left:1675px;top:413px;width:704px;height:2px;background:#7e0c14"></div>
<div class="a" style="left:1675px;top:644px;width:704px;height:2px;background:#7e0c14"></div>
<div class="a" style="left:1675px;top:678px;width:704px;height:2px;background:#7e0c14"></div>
<div class="a" style="left:1675px;top:711px;width:704px;height:2px;background:#7e0c14"></div>
<div class="a" style="left:1675px;top:743px;width:704px;height:2px;background:#7e0c14"></div>
<div class="a" style="left:1700px;top:84px;width:2px;height:330px;background:#7e0c14"></div>
<svg class="a" style="left:1680px;top:17px" width="18" height="22"><path d="M15.5,1.8 L3.5,11 L15.5,20.2" fill="none" stroke="#a0a0a0" stroke-width="4"/></svg>
<svg class="a" style="left:2357px;top:17px" width="18" height="22"><path d="M3,1.8 L15,11 L3,20.2" fill="none" stroke="#a0a0a0" stroke-width="4"/></svg>
<div class="a" style="left:1890px;top:10.0px;height:36px;line-height:36px;font-size:30px;color:#d0d0d0;white-space:nowrap;">天银机电</div>
<div class="a" style="left:2023px;top:8.5px;height:35px;line-height:35px;font-size:29px;color:#20d8e0;white-space:nowrap;font-family:'Liberation Serif',serif;">300342</div>
<div class="a" style="left:2120px;top:8.0px;height:21px;line-height:21px;font-size:15px;color:#f06060;white-space:nowrap;font-weight:bold;">R</div>
<div class="a" style="left:1683px;top:56.5px;height:27px;line-height:27px;font-size:21px;color:#d0d0d0;white-space:nowrap;">委比</div>
<div class="a" style="right:359px;top:54.5px;height:29px;line-height:29px;font-size:23px;color:#20d860;white-space:nowrap;font-family:'Liberation Serif',serif;transform:scaleX(0.92);transform-origin:right center;">-82.58%</div>
<div class="a" style="right:8px;top:54.5px;height:29px;line-height:29px;font-size:23px;color:#20d860;white-space:nowrap;font-family:'Liberation Serif',serif;transform:scaleX(0.92);transform-origin:right center;">2750</div>
<div class="a" style="left:1704px;top:88.5px;height:28px;line-height:28px;font-size:22px;color:#d0d0d0;white-space:nowrap;">5</div>
<div class="a" style="right:383px;top:86.5px;height:29px;line-height:29px;font-size:23px;color:#f06060;white-space:nowrap;font-family:'Liberation Serif',serif;transform:scaleX(0.92);transform-origin:right center;">14.34</div>
<div class="a" style="right:115px;top:86.5px;height:29px;line-height:29px;font-size:23px;color:#e8e840;white-space:nowrap;font-family:'Liberation Serif',serif;transform:scaleX(0.92);transform-origin:right center;">88</div>
<div class="a" style="left:1704px;top:122.0px;height:28px;line-height:28px;font-size:22px;color:#d0d0d0;white-space:nowrap;">4</div>
<div class="a" style="right:383px;top:120.0px;height:29px;line-height:29px;font-size:23px;color:#f06060;white-space:nowrap;font-family:'Liberation Serif',serif;transform:scaleX(0.92);transform-origin:right center;">14.33</div>
<div class="a" style="right:115px;top:120.0px;height:29px;line-height:29px;font-size:23px;color:#e8e840;white-space:nowrap;font-family:'Liberation Serif',serif;transform:scaleX(0.92);transform-origin:right center;">204</div>
<div class="a" style="left:1704px;top:155.5px;height:28px;line-height:28px;font-size:22px;color:#d0d0d0;white-space:nowrap;">3</div>
<div class="a" style="right:383px;top:153.5px;height:29px;line-height:29px;font-size:23px;color:#f06060;white-space:nowrap;font-family:'Liberation Serif',serif;transform:scaleX(0.92);transform-origin:right center;">14.32</div>
<div class="a" style="right:115px;top:153.5px;height:29px;line-height:29px;font-size:23px;color:#e8e840;white-space:nowrap;font-family:'Liberation Serif',serif;transform:scaleX(0.92);transform-origin:right center;">85</div>
<div class="a" style="left:1704px;top:188.5px;height:28px;line-height:28px;font-size:22px;color:#d0d0d0;white-space:nowrap;">2</div>
<div class="a" style="right:383px;top:186.5px;height:29px;line-height:29px;font-size:23px;color:#f06060;white-space:nowrap;font-family:'Liberation Serif',serif;transform:scaleX(0.92);transform-origin:right center;">14.31</div>
<div class="a" style="right:115px;top:186.5px;height:29px;line-height:29px;font-size:23px;color:#e8e840;white-space:nowrap;font-family:'Liberation Serif',serif;transform:scaleX(0.92);transform-origin:right center;">1432</div>
<div class="a" style="left:1704px;top:221.5px;height:28px;line-height:28px;font-size:22px;color:#d0d0d0;white-space:nowrap;">1</div>
<div class="a" style="right:383px;top:219.5px;height:29px;line-height:29px;font-size:23px;color:#f06060;white-space:nowrap;font-family:'Liberation Serif',serif;transform:scaleX(0.92);transform-origin:right center;">14.30</div>
<div class="a" style="right:115px;top:219.5px;height:29px;line-height:29px;font-size:23px;color:#e8e840;white-space:nowrap;font-family:'Liberation Serif',serif;transform:scaleX(0.92);transform-origin:right center;">1231</div>
<div class="a" style="left:1677px;top:121.0px;height:27px;line-height:27px;font-size:21px;color:#d0d0d0;white-space:nowrap;">卖</div>
<div class="a" style="left:1677px;top:187.5px;height:27px;line-height:27px;font-size:21px;color:#d0d0d0;white-space:nowrap;">盘</div>
<div class="a" style="left:1704px;top:254.5px;height:28px;line-height:28px;font-size:22px;color:#d0d0d0;white-space:nowrap;">1</div>
<div class="a" style="right:383px;top:252.5px;height:29px;line-height:29px;font-size:23px;color:#f06060;white-space:nowrap;font-family:'Liberation Serif',serif;transform:scaleX(0.92);transform-origin:right center;">14.29</div>
<div class="a" style="right:115px;top:252.5px;height:29px;line-height:29px;font-size:23px;color:#e8e840;white-space:nowrap;font-family:'Liberation Serif',serif;transform:scaleX(0.92);transform-origin:right center;">57</div>
<div class="a" style="left:1704px;top:287.9px;height:28px;line-height:28px;font-size:22px;color:#d0d0d0;white-space:nowrap;">2</div>
<div class="a" style="right:383px;top:285.9px;height:29px;line-height:29px;font-size:23px;color:#f06060;white-space:nowrap;font-family:'Liberation Serif',serif;transform:scaleX(0.92);transform-origin:right center;">14.28</div>
<div class="a" style="right:115px;top:285.9px;height:29px;line-height:29px;font-size:23px;color:#e8e840;white-space:nowrap;font-family:'Liberation Serif',serif;transform:scaleX(0.92);transform-origin:right center;">75</div>
<div class="a" style="left:1704px;top:321.0px;height:28px;line-height:28px;font-size:22px;color:#d0d0d0;white-space:nowrap;">3</div>
<div class="a" style="right:383px;top:319.0px;height:29px;line-height:29px;font-size:23px;color:#f06060;white-space:nowrap;font-family:'Liberation Serif',serif;transform:scaleX(0.92);transform-origin:right center;">14.27</div>
<div class="a" style="right:115px;top:319.0px;height:29px;line-height:29px;font-size:23px;color:#e8e840;white-space:nowrap;font-family:'Liberation Serif',serif;transform:scaleX(0.92);transform-origin:right center;">27</div>
<div class="a" style="left:1704px;top:354.0px;height:28px;line-height:28px;font-size:22px;color:#d0d0d0;white-space:nowrap;">4</div>
<div class="a" style="right:383px;top:352.0px;height:29px;line-height:29px;font-size:23px;color:#f06060;white-space:nowrap;font-family:'Liberation Serif',serif;transform:scaleX(0.92);transform-origin:right center;">14.26</div>
<div class="a" style="right:115px;top:352.0px;height:29px;line-height:29px;font-size:23px;color:#e8e840;white-space:nowrap;font-family:'Liberation Serif',serif;transform:scaleX(0.92);transform-origin:right center;">37</div>
<div class="a" style="left:1704px;top:387.1px;height:28px;line-height:28px;font-size:22px;color:#d0d0d0;white-space:nowrap;">5</div>
<div class="a" style="right:383px;top:385.1px;height:29px;line-height:29px;font-size:23px;color:#f06060;white-space:nowrap;font-family:'Liberation Serif',serif;transform:scaleX(0.92);transform-origin:right center;">14.25</div>
<div class="a" style="right:115px;top:385.1px;height:29px;line-height:29px;font-size:23px;color:#e8e840;white-space:nowrap;font-family:'Liberation Serif',serif;transform:scaleX(0.92);transform-origin:right center;">94</div>
<div class="a" style="left:1677px;top:286.9px;height:27px;line-height:27px;font-size:21px;color:#d0d0d0;white-space:nowrap;">买</div>
<div class="a" style="left:1677px;top:353.0px;height:27px;line-height:27px;font-size:21px;color:#d0d0d0;white-space:nowrap;">盘</div>
<div class="a" style="left:1683px;top:419.9px;height:27px;line-height:27px;font-size:21px;color:#d0d0d0;white-space:nowrap;">最新</div>
<div class="a" style="right:359px;top:417.9px;height:29px;line-height:29px;font-size:23px;color:#f06060;white-space:nowrap;font-family:'Liberation Serif',serif;transform:scaleX(0.92);transform-origin:right center;">14.30</div>
<div class="a" style="left:2034px;top:419.9px;height:27px;line-height:27px;font-size:21px;color:#d0d0d0;white-space:nowrap;">均价</div>
<div class="a" style="right:8px;top:417.9px;height:29px;line-height:29px;font-size:23px;color:#f06060;white-space:nowrap;font-family:'Liberation Serif',serif;transform:scaleX(0.92);transform-origin:right center;">14.23</div>
<div class="a" style="left:1683px;top:453.0px;height:27px;line-height:27px;font-size:21px;color:#d0d0d0;white-space:nowrap;">涨跌</div>
<div class="a" style="right:359px;top:451.0px;height:29px;line-height:29px;font-size:23px;color:#f06060;white-space:nowrap;font-family:'Liberation Serif',serif;transform:scaleX(0.92);transform-origin:right center;"><span style="font-size:19px">▲</span>1.55</div>
<div class="a" style="left:2034px;top:453.0px;height:27px;line-height:27px;font-size:21px;color:#d0d0d0;white-space:nowrap;">开盘</div>
<div class="a" style="right:8px;top:451.0px;height:29px;line-height:29px;font-size:23px;color:#f06060;white-space:nowrap;font-family:'Liberation Serif',serif;transform:scaleX(0.92);transform-origin:right center;">12.80</div>
<div class="a" style="left:1683px;top:486.1px;height:27px;line-height:27px;font-size:21px;color:#d0d0d0;white-space:nowrap;">涨幅</div>
<div class="a" style="right:359px;top:484.1px;height:29px;line-height:29px;font-size:23px;color:#f06060;white-space:nowrap;font-family:'Liberation Serif',serif;transform:scaleX(0.92);transform-origin:right center;">+12.16%</div>
<div class="a" style="left:2034px;top:486.1px;height:27px;line-height:27px;font-size:21px;color:#d0d0d0;white-space:nowrap;">最高</div>
<div class="a" style="right:8px;top:484.1px;height:29px;line-height:29px;font-size:23px;color:#f06060;white-space:nowrap;font-family:'Liberation Serif',serif;transform:scaleX(0.92);transform-origin:right center;">15.30</div>
<div class="a" style="left:1683px;top:519.4px;height:27px;line-height:27px;font-size:21px;color:#d0d0d0;white-space:nowrap;">总手</div>
<div class="a" style="right:359px;top:517.4px;height:29px;line-height:29px;font-size:23px;color:#20d8e0;white-space:nowrap;font-family:'Liberation Serif',serif;transform:scaleX(0.92);transform-origin:right center;">97.96<span style="font-family:Liberation Sans">万</span></div>
<div class="a" style="left:2034px;top:519.4px;height:27px;line-height:27px;font-size:21px;color:#d0d0d0;white-space:nowrap;">最低</div>
<div class="a" style="right:8px;top:517.4px;height:29px;line-height:29px;font-size:23px;color:#f06060;white-space:nowrap;font-family:'Liberation Serif',serif;transform:scaleX(0.92);transform-origin:right center;">12.80</div>
<div class="a" style="left:1683px;top:551.1px;height:27px;line-height:27px;font-size:21px;color:#d0d0d0;white-space:nowrap;">现手</div>
<div class="a" style="right:359px;top:549.1px;height:29px;line-height:29px;font-size:23px;color:#e8e840;white-space:nowrap;font-family:'Liberation Serif',serif;transform:scaleX(0.92);transform-origin:right center;">6545<span style="font-size:14px;color:#20e060">▼</span></div>
<div class="a" style="left:2034px;top:551.1px;height:27px;line-height:27px;font-size:21px;color:#d0d0d0;white-space:nowrap;">量比</div>
<div class="a" style="right:8px;top:549.1px;height:29px;line-height:29px;font-size:23px;color:#e8e840;white-space:nowrap;font-family:'Liberation Serif',serif;transform:scaleX(0.92);transform-origin:right center;">2.66</div>
<div class="a" style="left:1683px;top:584.4px;height:27px;line-height:27px;font-size:21px;color:#d0d0d0;white-space:nowrap;">金额</div>
<div class="a" style="right:359px;top:582.4px;height:29px;line-height:29px;font-size:23px;color:#e8e840;white-space:nowrap;font-family:'Liberation Serif',serif;transform:scaleX(0.92);transform-origin:right center;">13.94<span style="font-family:Liberation Sans">亿</span></div>
<div class="a" style="left:2034px;top:584.4px;height:27px;line-height:27px;font-size:21px;color:#d0d0d0;white-space:nowrap;">强弱</div>
<div class="a" style="right:8px;top:582.4px;height:29px;line-height:29px;font-size:23px;color:#f06060;white-space:nowrap;font-family:'Liberation Serif',serif;transform:scaleX(0.92);transform-origin:right center;"><span style="font-size:19px;color:#ff5050">▲</span>0.27</div>
<div class="a" style="left:1683px;top:617.5px;height:27px;line-height:27px;font-size:21px;color:#d0d0d0;white-space:nowrap;">换手</div>
<div class="a" style="right:359px;top:615.5px;height:29px;line-height:29px;font-size:23px;color:#e8e840;white-space:nowrap;font-family:'Liberation Serif',serif;transform:scaleX(0.92);transform-origin:right center;">23.53%</div>
<div class="a" style="left:2034px;top:617.5px;height:27px;line-height:27px;font-size:21px;color:#d0d0d0;white-space:nowrap;">5日</div>
<div class="a" style="right:8px;top:615.5px;height:29px;line-height:29px;font-size:23px;color:#e8e840;white-space:nowrap;font-family:'Liberation Serif',serif;transform:scaleX(0.92);transform-origin:right center;">62.21%</div>
<div class="a" style="left:1683px;top:649.3px;height:27px;line-height:27px;font-size:21px;color:#d0d0d0;white-space:nowrap;">涨停</div>
<div class="a" style="right:359px;top:647.3px;height:29px;line-height:29px;font-size:23px;color:#f06060;white-space:nowrap;font-family:'Liberation Serif',serif;transform:scaleX(0.92);transform-origin:right center;">15.30</div>
<div class="a" style="left:2034px;top:649.3px;height:27px;line-height:27px;font-size:21px;color:#d0d0d0;white-space:nowrap;">跌停</div>
<div class="a" style="right:8px;top:647.3px;height:29px;line-height:29px;font-size:23px;color:#20d860;white-space:nowrap;font-family:'Liberation Serif',serif;transform:scaleX(0.92);transform-origin:right center;">10.20</div>
<div class="a" style="left:1683px;top:682.5px;height:27px;line-height:27px;font-size:21px;color:#d0d0d0;white-space:nowrap;">笔数</div>
<div class="a" style="right:359px;top:680.5px;height:29px;line-height:29px;font-size:23px;color:#20d8e0;white-space:nowrap;font-family:'Liberation Serif',serif;transform:scaleX(0.92);transform-origin:right center;">67581</div>
<div class="a" style="left:2034px;top:682.5px;height:27px;line-height:27px;font-size:21px;color:#d0d0d0;white-space:nowrap;">均笔</div>
<div class="a" style="right:8px;top:680.5px;height:29px;line-height:29px;font-size:23px;color:#e8e840;white-space:nowrap;font-family:'Liberation Serif',serif;transform:scaleX(0.92);transform-origin:right center;">14.5</div>
<div class="a" style="left:1683px;top:715.8px;height:27px;line-height:27px;font-size:21px;color:#d0d0d0;white-space:nowrap;">内盘</div>
<div class="a" style="right:359px;top:713.8px;height:29px;line-height:29px;font-size:23px;color:#20d860;white-space:nowrap;font-family:'Liberation Serif',serif;transform:scaleX(0.92);transform-origin:right center;">447131</div>
<div class="a" style="left:2034px;top:715.8px;height:27px;line-height:27px;font-size:21px;color:#d0d0d0;white-space:nowrap;">外盘</div>
<div class="a" style="right:8px;top:713.8px;height:29px;line-height:29px;font-size:23px;color:#f06060;white-space:nowrap;font-family:'Liberation Serif',serif;transform:scaleX(0.92);transform-origin:right center;">532435</div>
<div class="a" style="left:1677px;top:745px;width:351px;height:39px;background:linear-gradient(#a00010,#480000)"></div>
<div class="a" style="left:2028px;top:745px;width:351px;height:39px;background:#262626"></div>
<div class="a" style="left:1814px;top:752.0px;height:24px;line-height:24px;font-size:18px;color:#e0e0e0;white-space:nowrap;">财务分析</div>
<div class="a" style="left:2165px;top:752.0px;height:24px;line-height:24px;font-size:18px;color:#d0d0d0;white-space:nowrap;">深度分析</div>
<div class="a" style="left:1678px;top:791.5px;height:27px;line-height:27px;font-size:21px;color:#d0d0d0;white-space:nowrap;">所属行业</div>
<div class="a" style="right:21px;top:791.5px;height:27px;line-height:27px;font-size:21px;color:#e8e830;white-space:nowrap;">家电-白色家电</div>
<div class="a" style="left:1678px;top:830.8px;height:27px;line-height:27px;font-size:21px;color:#d0d0d0;white-space:nowrap;">所属概念</div>
<div class="a" style="right:21px;top:831.3px;height:26px;line-height:26px;font-size:20px;color:#e8e830;white-space:nowrap;letter-spacing:0.4px;">华为概念-华为通信,5G概念,激光雷达,北斗导航,无人驾驶,智能...</div>
<div class="a" style="left:1677px;top:862px;width:683px;height:40px;background:linear-gradient(#3c3c3c,#1e1e1e)"></div>
<div class="a" style="left:1977px;top:868.5px;height:27px;line-height:27px;font-size:21px;color:#d0d0d0;white-space:nowrap;">主要指标</div>
<div class="a" style="left:2345px;top:870.0px;height:20px;line-height:20px;font-size:14px;color:#a0a0a0;white-space:nowrap;">?</div>
<div class="a" style="left:2361px;top:784px;width:16px;height:470px;background:#262626"></div>
<div class="a" style="left:2364px;top:786px;width:10px;height:140px;background:linear-gradient(90deg,#5a5a5a,#808080,#5a5a5a);border-radius:5px"></div>
<div class="a" style="left:1678px;top:909.3px;height:27px;line-height:27px;font-size:21px;color:#d0d0d0;white-space:nowrap;">财报披露</div>
<div class="a" style="right:20px;top:908.5px;height:28.5px;line-height:28.5px;font-size:22.5px;color:#c8c8c8;white-space:nowrap;">2023-10-26<span style="display:inline-block;width:20px;height:20px;border:1.6px solid #d0d0d0;border-radius:50%;font-family:Liberation Sans;font-size:15px;line-height:17px;text-align:center;color:#d0d0d0;vertical-align:0px;margin-left:1px;transform:scaleX(1.087)">3</span></div>
<div class="a" style="left:1678px;top:948.5px;height:27px;line-height:27px;font-size:21px;color:#d0d0d0;white-space:nowrap;">市盈率(TTM)</div>
<div class="a" style="right:20px;top:946.5px;height:29px;line-height:29px;font-size:23px;color:#f06060;white-space:nowrap;font-family:'Liberation Serif',serif;transform:scaleX(0.92);transform-origin:right center;">359.2<span style="display:inline-block;width:20px;height:20px;border:1.6px solid #f06060;border-radius:50%;font-family:Liberation Sans;font-size:15px;line-height:17px;text-align:center;color:#f06060;vertical-align:0px;margin-left:1px;transform:scaleX(1.087)">2</span></div>
<div class="a" style="left:1678px;top:987.5px;height:27px;line-height:27px;font-size:21px;color:#d0d0d0;white-space:nowrap;">扣非市盈率(TTM)</div>
<div class="a" style="right:20px;top:985.5px;height:29px;line-height:29px;font-size:23px;color:#f06060;white-space:nowrap;font-family:'Liberation Serif',serif;transform:scaleX(0.92);transform-origin:right center;">426.6<span style="display:inline-block;width:20px;height:20px;border:1.6px solid #f06060;border-radius:50%;font-family:Liberation Sans;font-size:15px;line-height:17px;text-align:center;color:#f06060;vertical-align:0px;margin-left:1px;transform:scaleX(1.087)">2</span></div>
<div class="a" style="left:1678px;top:1025.5px;height:27px;line-height:27px;font-size:21px;color:#d0d0d0;white-space:nowrap;">市净率</div>
<div class="a" style="right:20px;top:1023.5px;height:29px;line-height:29px;font-size:23px;color:#f06060;white-space:nowrap;font-family:'Liberation Serif',serif;transform:scaleX(0.92);transform-origin:right center;">3.98<span style="display:inline-block;width:20px;height:20px;border:1.6px solid #f06060;border-radius:50%;font-family:Liberation Sans;font-size:15px;line-height:17px;text-align:center;color:#f06060;vertical-align:0px;margin-left:1px;transform:scaleX(1.087)">2</span></div>
<div class="a" style="left:1678px;top:1064.5px;height:27px;line-height:27px;font-size:21px;color:#d0d0d0;white-space:nowrap;">有效流通市值</div>
<div class="a" style="right:20px;top:1062.5px;height:29px;line-height:29px;font-size:23px;color:#e8e840;white-space:nowrap;font-family:'Liberation Serif',serif;transform:scaleX(0.92);transform-origin:right center;">38.13<span style="font-family:Liberation Sans">亿</span></div>
<div class="a" style="left:1678px;top:1104.0px;height:27px;line-height:27px;font-size:21px;color:#d0d0d0;white-space:nowrap;">流通A市值</div>
<div class="a" style="right:20px;top:1102.0px;height:29px;line-height:29px;font-size:23px;color:#e8e840;white-space:nowrap;font-family:'Liberation Serif',serif;transform:scaleX(0.92);transform-origin:right center;">59.52<span style="font-family:Liberation Sans">亿</span></div>
<div class="a" style="left:1678px;top:1143.3px;height:27px;line-height:27px;font-size:21px;color:#d0d0d0;white-space:nowrap;">总市值</div>
<div class="a" style="right:20px;top:1141.3px;height:29px;line-height:29px;font-size:23px;color:#e8e840;white-space:nowrap;font-family:'Liberation Serif',serif;transform:scaleX(0.92);transform-origin:right center;">60.78<span style="font-family:Liberation Sans">亿</span></div>
<div class="a" style="left:1678px;top:1220.3px;height:27px;line-height:27px;font-size:21px;color:#d0d0d0;white-space:nowrap;">每股收益</div>
<div class="a" style="right:20px;top:1218.3px;height:29px;line-height:29px;font-size:23px;color:#f06060;white-space:nowrap;font-family:'Liberation Serif',serif;transform:scaleX(0.92);transform-origin:right center;">0.08<span style="display:inline-block;width:20px;height:20px;border:1.6px solid #f06060;border-radius:50%;font-family:Liberation Sans;font-size:15px;line-height:17px;text-align:center;color:#f06060;vertical-align:0px;margin-left:1px;transform:scaleX(1.087)">2</span></div>
<div class="a" style="left:1678px;top:1181.0px;height:24px;line-height:24px;font-size:18px;color:#f0a020;white-space:nowrap;">收益与增长</div>
<div class="a" style="left:1675px;top:0px;width:2px;height:1254px;background:#7e0c14"></div>
<div class="a" style="left:2377px;top:0px;width:2px;height:1254px;background:#7e0c14"></div>
</div>
</body></html>
